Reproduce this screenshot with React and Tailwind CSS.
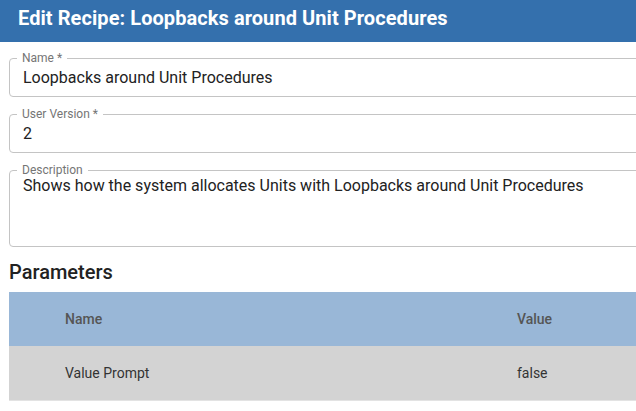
import React from 'react';

function Field({ label, value, multiline }) {
  return (
    <fieldset className="ml-[9px] w-[660px] rounded-[4px] border border-[#c4c4c4] pl-[7px]">
      <legend className="px-[5px] text-[12px] leading-[12px] text-[#757575]">{label}</legend>
      {multiline ? (
        <div className="h-[70px] pl-[6px] text-[16px] leading-[19px] text-[#222]">
          {value}
        </div>
      ) : (
        <div className="pb-[9px] pl-[6px] pt-[4px] text-[16px] leading-[19px] text-[#222]">
          {value}
        </div>
      )}
    </fieldset>
  );
}

export default function App() {
  const params = [{ name: 'Value Prompt', value: 'false' }];
  return (
    <div className="h-[411px] w-[636px] overflow-hidden bg-white font-['Roboto',sans-serif]">
      <div className="h-[42px] bg-[#3470ad] pl-[18px] pt-[6px] text-[20px] font-bold leading-[24px] tracking-[0.07px] text-white">
        Edit Recipe: Loopbacks around Unit Procedures
      </div>
      <div className="mt-[10px] flex flex-col gap-[11px]">
        <Field label="Name *" value="Loopbacks around Unit Procedures" />
        <Field label="User Version *" value="2" />
        <Field
          label="Description"
          value="Shows how the system allocates Units with Loopbacks around Unit Procedures"
          multiline
        />
      </div>
      <h2 className="ml-[9px] mt-[13px] text-[20px] font-medium leading-[24px] text-[#222]">
        Parameters
      </h2>
      <div className="ml-[9px] mt-[8px] w-[660px]">
        <div className="flex h-[54px] items-center bg-[#99b7d7] text-[14px] font-medium text-[#555]">
          <div className="w-[508px] pl-[56px]">Name</div>
          <div>Value</div>
        </div>
        {params.map((p) => (
          <div
            key={p.name}
            className="flex h-[55px] items-center border-b border-[#e3e3e3] bg-[#d3d3d3] text-[14px] text-[#333]"
          >
            <div className="w-[508px] pl-[56px]">{p.name}</div>
            <div>{p.value}</div>
          </div>
        ))}
      </div>
    </div>
  );
}
